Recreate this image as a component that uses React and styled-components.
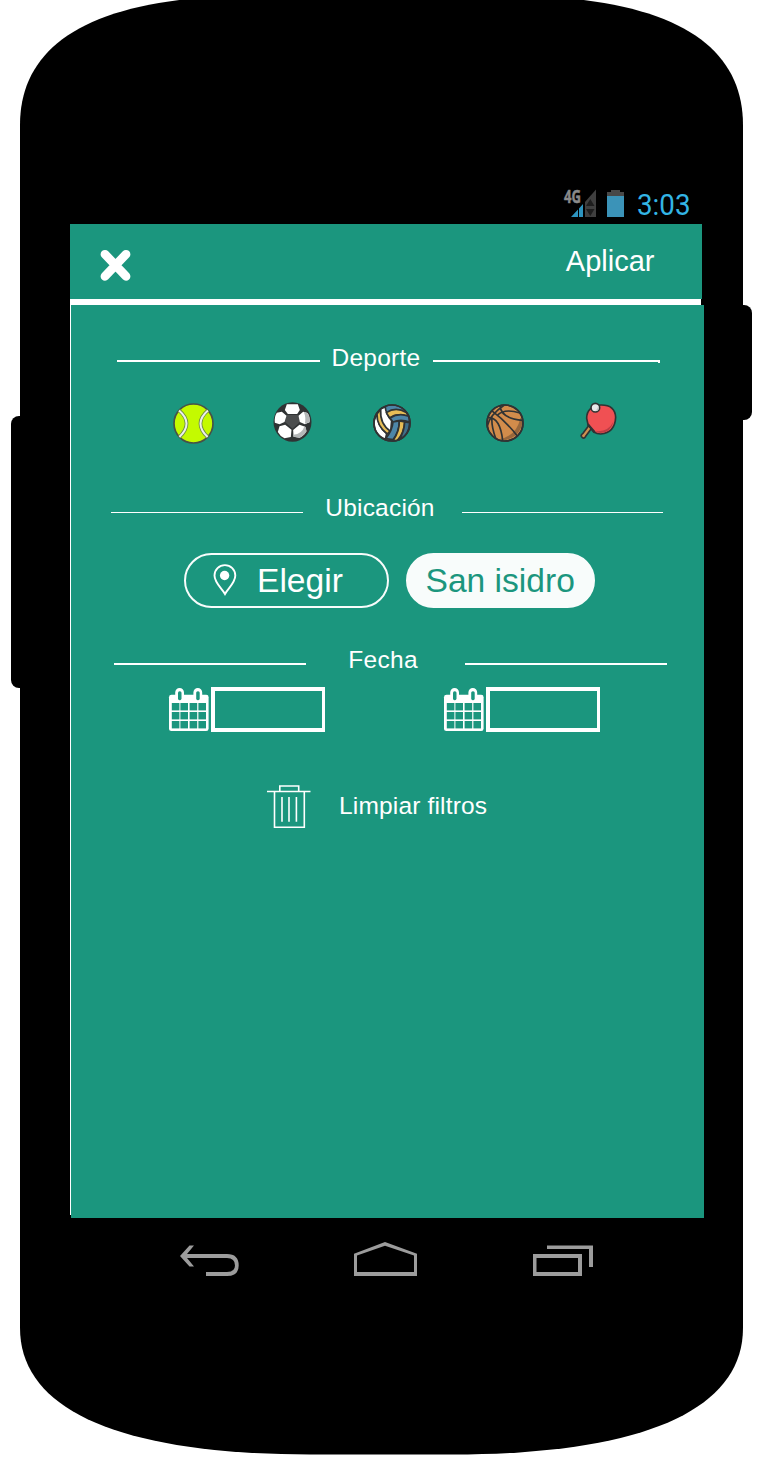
import React from "react";
import styled, { createGlobalStyle } from "styled-components";

const TEAL = "#1b967e";
const INK = "#303334";

const GlobalStyle = createGlobalStyle`
  body { margin: 0; background: #fff; }
  *, *::before, *::after { box-sizing: border-box; }
  svg { display: block; flex: none; overflow: visible; }
  button { background: none; border: 0; padding: 0; margin: 0; color: inherit; font: inherit; }
`;

const Stage = styled.div`
  position: relative;
  width: 757px;
  height: 1483px;
  padding-left: 20px;
  overflow: hidden;
  font-family: "Liberation Sans", Arial, sans-serif;
  color: #fff;
`;

const SideButton = styled.span`
  position: absolute;
  width: 30px;
  left: ${(p) => p.$left}px;
  top: ${(p) => p.$top}px;
  height: ${(p) => p.$height}px;
  border-radius: 8px;
  background: #000;
`;

const Device = styled.div`
  position: relative;
  width: 723px;
  height: 1455px;
  padding-left: 50px;
  background: #000;
  clip-path: path("M0 125 C0 46 68 -4.500 240 -4.500 H483 C655 -4.500 723 46 723 125 V1328 C723 1410 623 1454.4 433 1454.4 H290 C100 1454.4 0 1410 0 1328 Z");
`;

const StatusBar = styled.div`
  display: flex;
  align-items: flex-end;
  height: 224px;
  padding: 0 0 6px 494px;
`;

const Clock = styled.span`
  margin-left: 13px;
  font: 400 29.5px/30px Roboto, sans-serif;
  color: #33b5e5;
  width: 56px;
  transform: scaleX(0.94);
  transform-origin: left;
  margin-bottom: -2px;
`;

const Header = styled.header`
  display: flex;
  align-items: flex-start;
  justify-content: space-between;
  width: 632px;
  height: 75px;
  padding: 25px 47.5px 0 29.5px;
  background: ${TEAL};
`;

const ApplyButton = styled.button`
  font-size: 29px;
  line-height: 32px;
  margin-top: -4px;
`;

const Divider = styled.div`
  width: 631px;
  height: 6px;
  background: #fff;
`;

const Content = styled.main`
  width: 634px;
  height: 913px;
  padding-top: 37px;
  background: linear-gradient(#fff, #fff) 0 0 / 1px 910px no-repeat,
    linear-gradient(${TEAL}, ${TEAL}) 1px 0 / 633px 913px no-repeat;
`;

const Heading = styled.div`
  display: flex;
  align-items: flex-start;
  height: 30px;
  padding-left: ${(p) => p.$start}px;
`;

const Rule = styled.span`
  width: ${(p) => p.$width}px;
  height: ${(p) => p.$weight}px;
  margin-top: ${(p) => p.$drop}px;
  background: #fff;

  &::after {
    content: "";
    display: ${(p) => (p.$tick ? "block" : "none")};
    width: 2px;
    height: 3px;
    margin-left: auto;
    background: #fff;
  }
`;

const Label = styled.h2`
  width: ${(p) => p.$width}px;
  padding-left: ${(p) => p.$inset}px;
  margin: 0;
  font-size: 24.5px;
  font-weight: 400;
  line-height: 31px;
  letter-spacing: ${(p) => p.$track}px;
  white-space: nowrap;
`;

const Sports = styled.div`
  display: flex;
  align-items: flex-start;
  height: 42px;
  margin: 30px 0 48px 103px;
`;

const SportButton = styled.button`
  padding-top: ${(p) => p.$drop || 0}px;
  margin-right: ${(p) => p.$gap || 0}px;
`;

const Chips = styled.div`
  display: flex;
  gap: 16.5px;
  margin: 31px 0 36px 114px;
`;

const Chip = styled.button`
  display: flex;
  align-items: center;
  width: ${(p) => p.$width}px;
  height: 55px;
  padding-left: ${(p) => p.$inset}px;
  padding-bottom: 1px;
  gap: 20.5px;
  border-radius: 28px;
  border: 2px solid #f8fcfb;
  background: ${(p) => (p.$filled ? "#f8fcfb" : "transparent")};
  color: ${(p) => (p.$filled ? TEAL : "#fff")};
  font-size: 33.6px;
  line-height: 49px;
  white-space: nowrap;
`;

const Dates = styled.div`
  display: flex;
  gap: 119px;
  margin: 13px 0 53px 99px;
`;

const DateField = styled.label`
  display: flex;
  gap: 2px;
`;

const DateInput = styled.input`
  width: 114px;
  height: 45px;
  margin: 0;
  padding: 0 6px;
  border: 4px solid #fff;
  border-right-width: 3px;
  border-radius: 0;
  background: transparent;
  outline: 0;
`;

const ClearButton = styled.button`
  display: flex;
  align-items: flex-start;
  gap: 28px;
  margin-left: 197px;
  font-size: 24.5px;
  line-height: 41px;
  letter-spacing: 0.17px;
`;

const NavBar = styled.nav`
  display: flex;
  align-items: flex-start;
  padding: 24px 0 0 110px;
`;

const NavButton = styled.button`
  margin-right: ${(p) => p.$gap || 0}px;
`;

const Signal = () => (
  <svg width="32" height="30" viewBox="0 0 32 30">
    <text x="0" y="14.5" fontFamily="Open Sans, sans-serif" fontWeight="700" fontSize="17.5" textLength="17" lengthAdjust="spacingAndGlyphs" fill="#8a8a8a" stroke="#8a8a8a" strokeWidth="0.5">4G</text>
    <path d="M7 29 L14 21.5 V29Z M15 20.5 L19 16 V29 H15Z" fill="#2d94bf" />
    <path d="M21 14 L32 1.5 V29 H21Z" fill="#3f3f3f" />
    <path d="M22 18 L26.3 11 L30.5 18Z M22 21 L26.3 28 L30.5 21Z" fill="#1d1d1d" />
  </svg>
);

const BatterySvg = styled.svg`
  margin-left: 11px;
`;

const Battery = () => (
  <BatterySvg width="17" height="28" viewBox="0 0 17 28">
    <path d="M4 0H13V2H17V7H0V2H4Z" fill="#484848" />
    <rect y="6" width="17" height="21" fill="#3b93b8" />
  </BatterySvg>
);

const Close = () => (
  <svg width="31" height="32" viewBox="0 0 31 32" stroke="#fff" strokeWidth="8.8" strokeLinecap="round">
    <path d="M5 5.3 L26 27.3 M26 5.3 L5 27.3" />
  </svg>
);

const Tennis = () => (
  <svg width="41" height="41" viewBox="24 39 122 122" fill="none">
    <circle cx="85" cy="100" r="58" fill="#c4fa00" stroke="#485246" strokeWidth="5" />
    <path d="M42 61 Q86 99 43 140 M128 61 Q84 99 127 140" stroke="#6d8a48" strokeWidth="11" />
    <path d="M42 61 Q86 99 43 140 M128 61 Q84 99 127 140" stroke="#eef0ea" strokeWidth="6" />
  </svg>
);

const Soccer = () => (
  <svg width="39" height="40" viewBox="326 36 116 120">
    <ellipse cx="384" cy="96" rx="57" ry="59.5" fill={INK} />
    <path d="M366 75H401L407 95L384 116L361 95Z" fill="#4b4d4e" />
    <path d="M367 43H400L406 60L398 72H370L361 60Z M337 68L352 65L366 77L360 96L345 103L331 98Q329 80 337 68Z M345 109L362 104L381 119L379 141L360 145Q346 138 340 126Z M402 77L416 65L429 69Q438 82 435 97L421 103L406 96Z M386 120L405 104L422 110L426 124Q417 139 405 143L387 140Z" fill="#fff" />
    <path d="M418 66L429 69Q438 82 435 97L421 101Q425 82 418 66Z M420 109L424 112L426 124Q417 139 405 143L387 140V134Q412 133 420 109Z" fill="#b4b7b8" />
  </svg>
);

const Volley = () => (
  <svg width="38" height="38" viewBox="23 42 114 114" stroke={INK} strokeWidth="5" strokeLinejoin="round">
    <circle cx="80" cy="99" r="54" fill="#4d86a8" />
    <path d="M35 70Q36 110 64 131L60 148Q24 134 26 92Z" fill="#fff" />
    <path d="M46 57Q42 94 75 122L66 132Q34 108 35 72Z" fill="#e7bd56" />
    <path d="M46 57L60 50Q60 70 79 92L76 124Q43 103 46 57Z" fill="#fff" />
    <path d="M63 68Q92 48 123 68L130 80Q94 67 73 84Z" fill="#e7bd56" />
    <path d="M74 84Q101 67 130 79L133 96Q106 86 83 96Z" fill="#4d86a8" />
    <path d="M83 96L102 93Q102 124 83 149L61 146Q81 122 83 96Z" fill="#4d86a8" />
    <path d="M102 93L118 96Q116 130 96 151L83 152Q103 124 102 93Z" fill="#e7bd56" />
    <path d="M118 96L133 98Q132 135 102 149Q117 124 118 96Z" fill="#416f8b" />
    <circle cx="80" cy="99" r="54" fill="none" />
  </svg>
);

const Basket = () => (
  <svg width="38" height="38" viewBox="363 42 114 114" fill="none" stroke={INK} strokeWidth="5">
    <circle cx="420" cy="99" r="54" fill="#d28c4b" />
    <path d="M473 86Q472 141 414 152Q407 150 401 148Q455 139 466 84Z" fill="#98673c" stroke="none" />
    <path d="M380 62Q424 95 457 138 M418 45Q374 75 367 108 M405 47Q408 86 473 91 M370 82Q406 83 413 152 M381 78Q378 106 392 145 M397 76Q418 54 465 69" />
    <circle cx="420" cy="99" r="54" />
  </svg>
);

const Paddle = () => (
  <svg width="36" height="38" viewBox="32 200 108 114" strokeLinejoin="round">
    <path d="M65 277L46 303Q40 314 33 303Q31 299 38 294L56 270Z" fill="#d0904f" stroke={INK} strokeWidth="5" />
    <path d="M53 267L49 249Q49 213 91 209Q134 208 136 246Q134 293 91 296Q80 296 70 290Z" fill="#f05053" stroke={INK} strokeWidth="5" />
    <path d="M75 287Q113 292 130 258Q121 292 91 293Q82 293 75 287Z" fill="#bc3d45" />
    <path d="M52 267L73 291" stroke={INK} strokeWidth="7" />
    <circle cx="75" cy="217" r="13" fill="#e9eaea" stroke={INK} strokeWidth="5" />
    <path d="M83 210Q91 225 74 227Q84 221 83 210Z" fill="#bfc3c3" />
  </svg>
);

const Pin = () => (
  <svg width="24" height="32" viewBox="0 0 24 32">
    <path d="M12 30C9.500 25 1.500 19 1.500 11.500A10.300 10.300 0 0 1 22.300 11.500C22.300 19 14.500 25 12 30Z" fill="none" stroke="#fff" strokeWidth="1.900" />
    <circle cx="11.600" cy="11.500" r="4.700" fill="#fff" />
  </svg>
);

const CalendarSvg = styled.svg`
  margin-top: 1px;
`;

const Calendar = () => (
  <CalendarSvg width="40" height="43" viewBox="0 0 40 43">
    <path d="M2.500 6.800H37.200Q39.600 6.800 39.600 9.200V40.500Q39.600 43 37.200 43H2.500Q0 43 0 40.500V9.200Q0 6.800 2.500 6.800Z" fill="#fff" />
    <path d="M6.200 4.500a4.400 4.500 0 0 1 8.800 0V13H6.200Z M24.400 4.500a4.400 4.500 0 0 1 8.800 0V13H24.400Z" fill="#fff" />
    <g fill={TEAL}>
      <rect x="9" y="3.200" width="3.500" height="9" rx="1.600" />
      <rect x="27.200" y="3.200" width="3.500" height="9" rx="1.600" />
      {[15, 24, 33].map((y) =>
        [2.8, 11.4, 20.6, 29.4].map((x) => <rect key={`${x}-${y}`} x={x} y={y} width="7.600" height="7.400" />)
      )}
    </g>
  </CalendarSvg>
);

const Trash = () => (
  <svg width="44" height="44" viewBox="0 0 44 44" fill="none" stroke="#fff" strokeWidth="1.600">
    <path d="M0 6.500H43.500 M12.800 6.500V1H31.700V6.500 M7.500 6.500V42.200H37.300V6.500" />
    <path d="M15 12V36.700 M22 12V36.700 M29.400 12V36.700" />
  </svg>
);

const BackIcon = () => (
  <svg width="59" height="35" viewBox="0 0 59 35" fill="#9c9c9c">
    <path d="M0 14L9.500 3.500H14L7 12H47Q58.700 12 58.700 23.500Q58.700 34 47 34H26V30H47Q55 30 55 23.500Q55 16 47 16H7L14 24.500H9.500Z" />
  </svg>
);

const HomeIcon = () => (
  <svg width="63" height="35" viewBox="0 0 63 35">
    <path d="M0 11.700L31 0L63 11.700V34H0Z M3 13.500V30H60V13.500L31 3.700Z" fill="#9c9c9c" fillRule="evenodd" />
  </svg>
);

const RecentIcon = () => (
  <svg width="60" height="35" viewBox="0 0 60 35">
    <path d="M14 3.500H60V25H56V7H14Z M0 12H49V34H0Z M3.500 16V30H45V16Z" fill="#9c9c9c" fillRule="evenodd" />
  </svg>
);

function SectionHeading({ start, left, label, right, drop, weight, inset, width, track, tick }) {
  return (
    <Heading $start={start}>
      <Rule $width={left} $weight={weight} $drop={drop} />
      <Label $width={width} $inset={inset} $track={track}>{label}</Label>
      <Rule $width={right} $weight={weight} $drop={drop} $tick={tick} />
    </Heading>
  );
}

export default function App() {
  return (
    <Stage>
      <GlobalStyle />
      <SideButton $left={11} $top={416} $height={272} />
      <SideButton $left={722} $top={305} $height={115} />
      <Device>
        <StatusBar>
          <Signal />
          <Battery />
          <Clock>3:03</Clock>
        </StatusBar>
        <Header>
          <button aria-label="Cerrar"><Close /></button>
          <ApplyButton>Aplicar</ApplyButton>
        </Header>
        <Divider />
        <Content>
          <SectionHeading start={47} left={203} label="Deporte" inset={11.5} width={113} right={227} drop={18} weight={2} track={0.25} tick />
          <Sports>
            <SportButton $drop={1} $gap={59} aria-label="Tenis"><Tennis /></SportButton>
            <SportButton $gap={61} aria-label="Fútbol"><Soccer /></SportButton>
            <SportButton $drop={2} $gap={75} aria-label="Vóley"><Volley /></SportButton>
            <SportButton $drop={2} $gap={57} aria-label="Básquet"><Basket /></SportButton>
            <SportButton aria-label="Ping pong"><Paddle /></SportButton>
          </Sports>
          <SectionHeading start={41} left={192} label="Ubicación" inset={22.3} width={159} right={201} drop={20} weight={1} track={0.2} />
          <Chips>
            <Chip $width={205} $inset={26.5}><Pin />Elegir</Chip>
            <Chip $width={189.5} $inset={18} $filled>San isidro</Chip>
          </Chips>
          <SectionHeading start={44} left={192} label="Fecha" inset={42.3} width={159} right={202} drop={19} weight={2} track={0.3} />
          <Dates>
            <DateField><Calendar /><DateInput aria-label="Desde" /></DateField>
            <DateField><Calendar /><DateInput aria-label="Hasta" /></DateField>
          </Dates>
          <ClearButton><Trash />Limpiar filtros</ClearButton>
        </Content>
        <NavBar>
          <NavButton $gap={115} aria-label="Atrás"><BackIcon /></NavButton>
          <NavButton $gap={116} aria-label="Inicio"><HomeIcon /></NavButton>
          <NavButton aria-label="Recientes"><RecentIcon /></NavButton>
        </NavBar>
      </Device>
    </Stage>
  );
}
